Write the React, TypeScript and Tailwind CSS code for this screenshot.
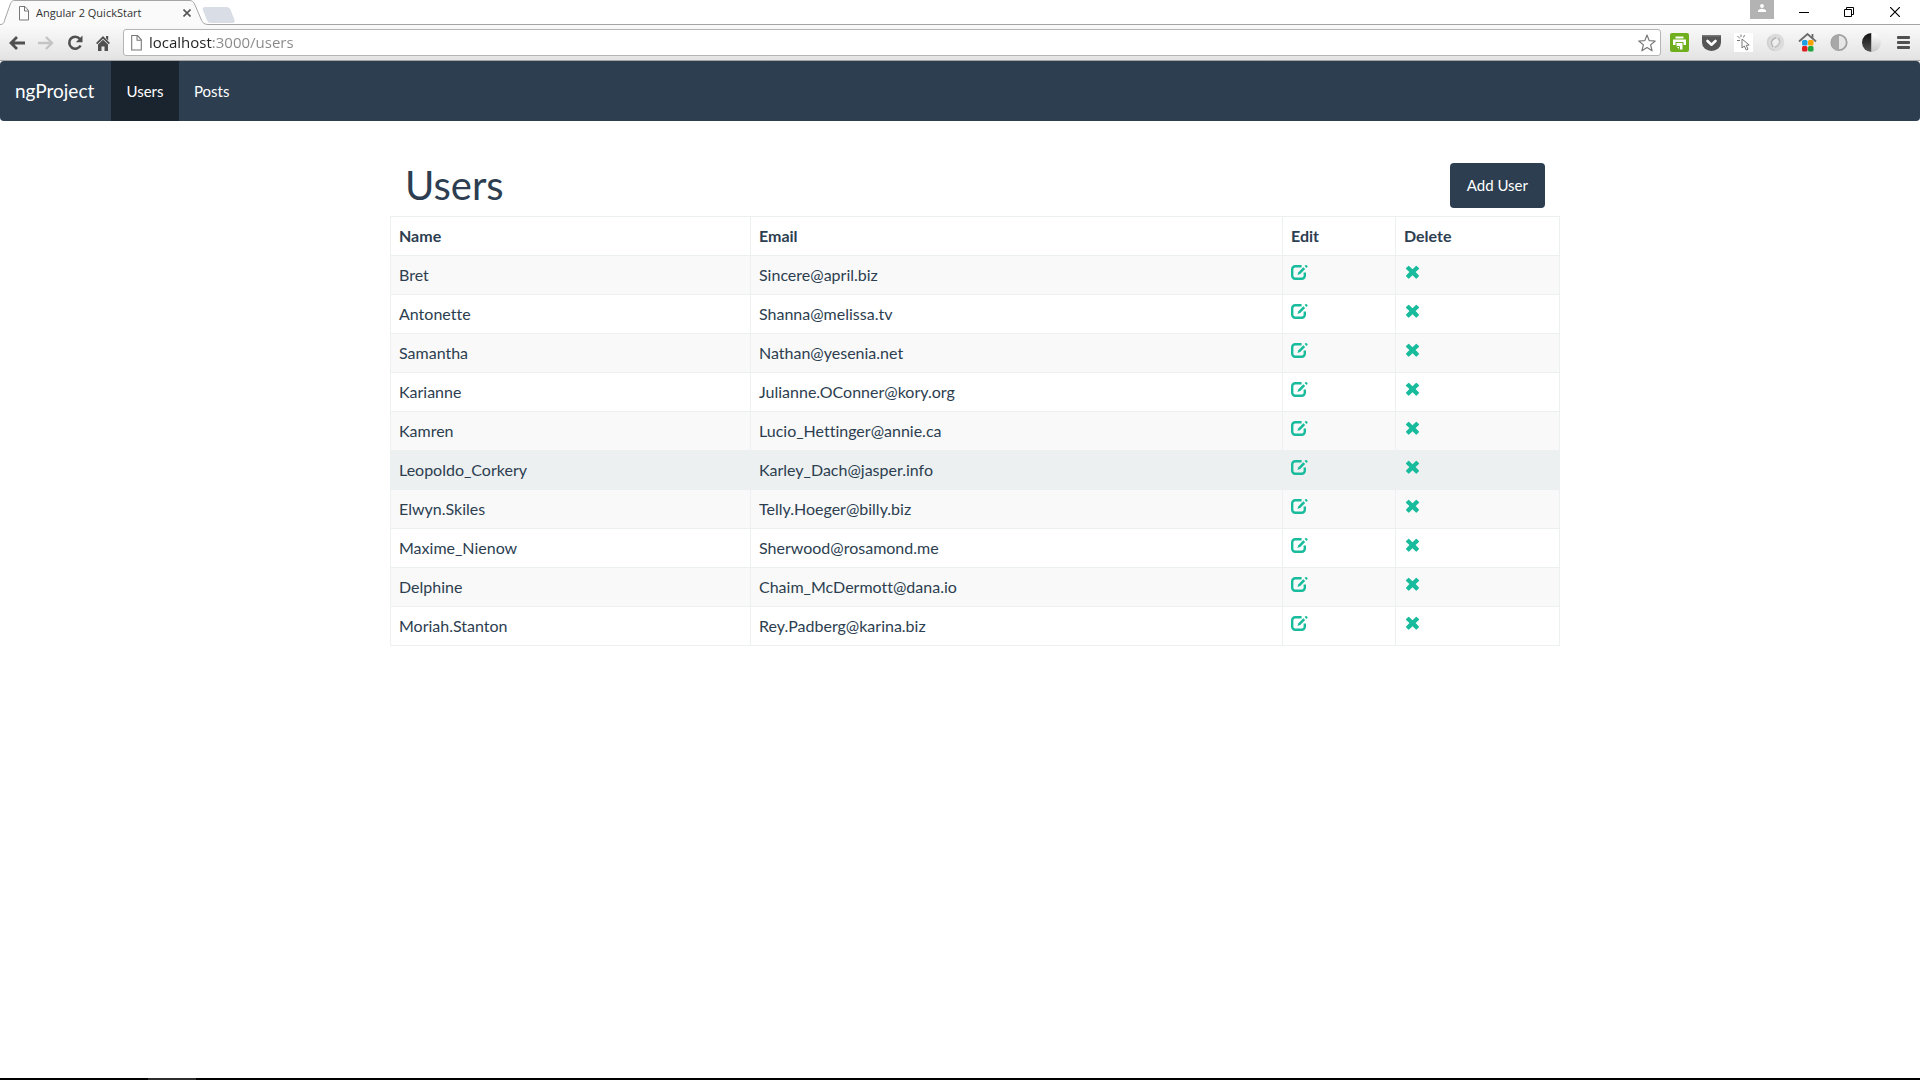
import { ReactNode } from "react";
import clsx from "clsx";

const users = [
  { name: "Bret", email: "Sincere@april.biz" },
  { name: "Antonette", email: "Shanna@melissa.tv" },
  { name: "Samantha", email: "Nathan@yesenia.net" },
  { name: "Karianne", email: "Julianne.OConner@kory.org" },
  { name: "Kamren", email: "Lucio_Hettinger@annie.ca" },
  { name: "Leopoldo_Corkery", email: "Karley_Dach@jasper.info", active: true },
  { name: "Elwyn.Skiles", email: "Telly.Hoeger@billy.biz" },
  { name: "Maxime_Nienow", email: "Sherwood@rosamond.me" },
  { name: "Delphine", email: "Chaim_McDermott@dana.io" },
  { name: "Moriah.Stanton", email: "Rey.Padberg@karina.biz" },
];

function PageIcon({ className }: { className?: string }) {
  return (
    <svg viewBox="0 0 12 15" className={className} fill="#fff" stroke="#777" strokeWidth="1">
      <path d="M1.5.5h5.5l3.5 4v9.5h-9z" />
      <path d="M6.5.5v4.5h4" fill="none" />
    </svg>
  );
}

function EditIcon() {
  return (
    <svg viewBox="0 0 17 15" className="h-[15px] w-[17px]" fill="none">
      <path
        d="M10.6 1.3H4.2A3 3 0 0 0 1.2 4.3v6.4a3 3 0 0 0 3 3h6.6a3 3 0 0 0 3-3V7.6"
        stroke="currentColor"
        strokeWidth="2.4"
      />
      <path d="M12.3 2.2l1.9 1.9-4.9 5-2.9 1 1-2.9z" fill="currentColor" />
      <path d="M13.6 1l1-.9q.5-.3 1 .1l.9.9q.3.5 0 .9l-1 .9z" fill="currentColor" />
    </svg>
  );
}

function RemoveIcon() {
  return (
    <svg viewBox="-1 0 15 15" className="size-[15px]">
      <path
        d="M4.1.9 7.5 4.2 10.9.9q.4-.3.8 0l2.2 2.2q.3.4 0 .8L10.6 7.1l3.3 3.4q.3.4 0 .8l-2.2 2.2q-.4.3-.8 0L7.5 10.2l-3.4 3.3q-.4.3-.8 0l-2.2-2.2q-.3-.4 0-.8l3.3-3.4L1.1 3.9q-.3-.4 0-.8L3.3.9q.4-.3.8 0z"
        fill="currentColor"
      />
    </svg>
  );
}

function ToolButton({ label, children }: { label: string; children: ReactNode }) {
  return (
    <button aria-label={label} className="size-[19px] shrink-0">
      {children}
    </button>
  );
}

function TabStrip() {
  return (
    <div className="flex h-6 items-start justify-between bg-white">
      <div className="flex">
        <div className="relative z-10 h-[25px] w-[210px]">
          <svg viewBox="0 0 210 25" className="absolute inset-0 size-full">
            <path
              d="M0 24.5C4 24.5 4 22 5 19L10 5C11.5 1 12.5.5 15 .5H189C192 .5 193.5 1.5 195 5L201 19C203 23.5 204 24.5 210 24.5V25H0Z"
              fill="#fafafa"
            />
            <path
              d="M0 24.5C4 24.5 4 22 5 19L10 5C11.5 1 12.5.5 15 .5H189C192 .5 193.5 1.5 195 5L201 19C203 23.5 204 24.5 210 24.5"
              fill="none"
              stroke="#a5a5a5"
            />
          </svg>
          <div className="relative flex h-6 items-center pt-0.5 pl-[18px] text-[11px] text-[#333]">
            <PageIcon className="mr-1.5 h-[15px] w-3" />
            <span className="w-[147px]">Angular 2 QuickStart</span>
            <button aria-label="Close tab">
              <svg viewBox="0 0 8 8" className="size-2" stroke="#555" strokeWidth="1.6">
                <path d="M.5.5l7 7M7.5.5l-7 7" />
              </svg>
            </button>
          </div>
        </div>
        <button aria-label="New tab" className="-ml-2 pt-[5px]">
          <svg viewBox="0 0 33 16" className="h-4 w-[33px]">
            <path d="M3 0H25q2.5 0 3.5 2.5L32.5 13q.8 3-2 3H9q-3 0-4-2.5L.8 3Q0 0 3 0z" fill="#d9dee6" />
          </svg>
        </button>
      </div>
      <div className="flex items-start pr-5">
        <button aria-label="Profile" className="flex h-[19px] w-6 justify-center bg-[#b3b3b3] pt-1">
          <svg viewBox="0 0 8 8" className="size-2" fill="#fff">
            <circle cx="4" cy="2" r="1.9" />
            <path d="M0 8V6.5Q1 4.8 4 4.8t4 1.7V8z" />
          </svg>
        </button>
        <button aria-label="Minimize" className="ml-[25px] pt-[7px]">
          <svg viewBox="0 0 10 10" className="size-2.5">
            <path d="M0 5.5h10" stroke="#000" />
          </svg>
        </button>
        <button aria-label="Restore" className="ml-[35px] pt-[7px]">
          <svg viewBox="0 0 10 10" className="size-2.5" fill="none" stroke="#000">
            <path d="M.5 2.5h7v7h-7zM2.5 2.5v-2h7v7h-2" />
          </svg>
        </button>
        <button aria-label="Close" className="ml-9 pt-[7px]">
          <svg viewBox="0 0 10 10" className="size-2.5" stroke="#000" strokeWidth="1.2">
            <path d="M0 0l10 10M10 0L0 10" />
          </svg>
        </button>
      </div>
    </div>
  );
}

function Toolbar() {
  return (
    <div className="flex h-[37px] items-center border-t border-b border-[#a5a5a5] bg-linear-to-b from-[#fafafa] to-[#e3e3e3] pr-2.5 pl-[9px]">
      <div className="flex w-[114px] items-center gap-[13px]">
        <button aria-label="Back">
          <svg viewBox="0 0 16 14" className="h-3.5 w-4" fill="none" stroke="#505050" strokeWidth="2.8">
            <path d="M8 1L2 7l6 6M2.5 7H16" />
          </svg>
        </button>
        <button aria-label="Forward">
          <svg viewBox="0 0 16 14" className="h-3.5 w-4" fill="none" stroke="#c4c4c4" strokeWidth="2.4">
            <path d="M8 1l6 6-6 6M13.5 7H0" />
          </svg>
        </button>
        <button aria-label="Reload">
          <svg viewBox="0 0 16 16" className="size-4" fill="none">
            <path d="M12.8 3.8A6 6 0 1 0 13.6 10.5" stroke="#505050" strokeWidth="2.6" />
            <path d="M15.5.5v6.7H8.8z" fill="#505050" />
          </svg>
        </button>
        <button aria-label="Home">
          <svg viewBox="0 0 14 16" className="h-4 w-3.5" fill="#505050">
            <path d="M7 1l7 7-1.3 1.3L7 3.7 1.3 9.3 0 8z" />
            <path d="M2 9.6l5-4.8 5 4.8V16H8.5v-4.5h-3V16H2zM10 1h2.2v4.5L10 3.3z" />
          </svg>
        </button>
      </div>
      <div className="flex h-[27px] grow items-center rounded-[3px] border border-[#b5b5b5] bg-white pr-1 pl-1.5">
        <label htmlFor="address" className="mr-1.5">
          <PageIcon className="h-4 w-[13px]" />
        </label>
        {/* host is dark, the rest of the address is dimmed */}
        <input
          id="address"
          aria-label="Address"
          defaultValue="localhost:3000/users"
          className="h-full min-w-0 grow bg-linear-to-r from-[#222] from-[64px] to-[#888] to-[64px] bg-clip-text pb-0.5 text-[15px] text-transparent outline-none"
        />
        <button aria-label="Bookmark">
          <svg viewBox="0 0 18 18" className="size-[18px]" fill="#fff" stroke="#777" strokeWidth="1.2" strokeLinejoin="round">
            <path d="M9 1l2.2 5.6 6 .4-4.6 3.9 1.5 5.9L9 13.5l-5.1 3.3 1.5-5.9L.8 7l6-.4z" />
          </svg>
        </button>
      </div>
      <div className="ml-[9px] flex items-center gap-[13px]">
        <ToolButton label="Print">
          <svg viewBox="0 0 19 19" className="size-full">
            <rect width="19" height="19" rx="2" fill="#6faf1d" />
            <path d="M5.5 3.5h8v2h-8z" fill="#fff" />
            <path d="M3 6.5h13v5.5h-2.5V9H5.500v3H3z" fill="#fff" />
            <path d="M6.5 10h6v6.5H9.500l-3-3z" fill="#fff" />
            <path d="M6.500 13.500h3v3" fill="none" stroke="#6faf1d" />
          </svg>
        </ToolButton>
        <ToolButton label="Pocket">
          <svg viewBox="0 0 19 19" className="size-full">
            <path d="M0 2h19v7.5a9.5 8.5 0 0 1-19 0z" fill="#555" />
            <path d="M0 2h19v1.5H0z" fill="#777" />
            <path d="M5.5 8l4 3.7 4-3.7" fill="none" stroke="#fff" strokeWidth="2.6" strokeLinecap="round" strokeLinejoin="round" />
          </svg>
        </ToolButton>
        <ToolButton label="Pointer">
          <svg viewBox="0 0 19 19" className="size-full" fill="none" stroke="#777">
            <path d="M0 0h19v19H0z" fill="#fff" stroke="none" />
            <path d="M8 6v9l2.300-2 2 4 1.700-.8-1.800-3.900 3-.3zM3 7.500h3M3.500 3l2.500 2.500M7 1.500V4M10.500 2L9.500 4.500" />
          </svg>
        </ToolButton>
        <ToolButton label="Ring">
          <svg viewBox="0 0 19 19" className="size-full" fill="none">
            <circle cx="9.5" cy="9.5" r="6.3" stroke="#dcdcdc" strokeWidth="5" />
            <path d="M9 17.5A8 8 0 0 1 4 4" stroke="#cfcfcf" strokeWidth="1.5" />
            <path d="M7 14Q2.5 8 10 4.5" stroke="#b5b5b5" strokeWidth="1.5" />
            <path d="M12 5q4.5 5-3 9.5" stroke="#c0c0c0" strokeWidth="1.5" />
          </svg>
        </ToolButton>
        <ToolButton label="Start page">
          <svg viewBox="0 0 19 19" className="size-full">
            <path d="M1 8.5L9.5 1 18 8.5M14.5 1v4" fill="none" stroke="#6b6b6b" strokeWidth="1.8" />
            <rect x="4" y="7" width="5.5" height="5.5" rx="1.5" fill="#1ba1e2" />
            <rect x="10" y="7" width="5.5" height="5.5" rx="1.5" fill="#f9a100" />
            <rect x="4" y="13" width="5.5" height="5.5" rx="1.5" fill="#e02020" />
            <rect x="10" y="13" width="5.5" height="5.5" rx="1.5" fill="#1da53f" />
          </svg>
        </ToolButton>
        <ToolButton label="Contrast">
          <svg viewBox="0 0 19 19" className="size-full">
            <circle cx="9" cy="9.5" r="7.7" fill="#e6e6e6" stroke="#a0a0a0" strokeWidth="1.8" />
            <path d="M9 1.8a7.7 7.7 0 0 0 0 15.4z" fill="#a8a8a8" />
          </svg>
        </ToolButton>
        <ToolButton label="Dark mode">
          <svg viewBox="0 0 19 19" className="size-full">
            <defs>
              <linearGradient id="dark" x2="0" y2="1">
                <stop stopColor="#111" />
                <stop offset="1" stopColor="#555" />
              </linearGradient>
              <linearGradient id="light" x2="0" y2="1">
                <stop stopColor="#fff" />
                <stop offset="1" stopColor="#c8c8c8" />
              </linearGradient>
            </defs>
            <path d="M9.5 0a9.5 9.5 0 0 0 0 19z" fill="url(#dark)" />
            <path d="M9.5 0a9.5 9.5 0 0 1 0 19z" fill="url(#light)" />
          </svg>
        </ToolButton>
        <button aria-label="Menu" className="ml-[3px]">
          <svg viewBox="0 0 13 13" className="size-[13px]" fill="#505050">
            <rect width="13" height="3" rx="1" />
            <rect y="5" width="13" height="3" rx="1" />
            <rect y="10" width="13" height="3" rx="1" />
          </svg>
        </button>
      </div>
    </div>
  );
}

function Navbar() {
  return (
    <nav className="flex h-[60px] items-stretch rounded bg-[#2c3e50] text-[15px] text-white">
      <a href="#" className="flex w-[111px] items-center pl-[15px] text-[19px]">
        ngProject
      </a>
      <a href="#users" className="flex w-[68px] items-center justify-center bg-[#1a242f]">
        Users
      </a>
      <a href="#posts" className="flex items-center px-[15px]">
        Posts
      </a>
    </nav>
  );
}

function UsersTable() {
  const cell = "border border-[#ecf0f1] p-2";

  return (
    <table className="w-full table-fixed border-collapse text-left text-[16px] leading-[22px] [font-variant-ligatures:none]">
      <thead>
        <tr>
          <th className={clsx(cell, "w-[360px]")}>Name</th>
          <th className={cell}>Email</th>
          <th className={clsx(cell, "w-[113px]")}>Edit</th>
          <th className={clsx(cell, "w-[164px]")}>Delete</th>
        </tr>
      </thead>
      <tbody>
        {users.map((user) => (
          <tr key={user.name} className={user.active ? "bg-[#ecf0f1]" : "odd:bg-[#f9f9f9]"}>
            <td className={cell}>{user.name}</td>
            <td className={cell}>{user.email}</td>
            <td className={cell}>
              <a href="#edit" aria-label={`Edit ${user.name}`} className="flex h-[22px] items-start pt-px text-[#18bc9c]">
                <EditIcon />
              </a>
            </td>
            <td className={cell}>
              <a href="#delete" aria-label={`Delete ${user.name}`} className="flex h-[22px] items-start pt-px text-[#18bc9c]">
                <RemoveIcon />
              </a>
            </td>
          </tr>
        ))}
      </tbody>
    </table>
  );
}

export default function App() {
  return (
    <div className="flex min-h-screen flex-col bg-white">
      <header className="font-['Open_Sans',sans-serif]">
        <TabStrip />
        <Toolbar />
      </header>
      <div className="grow font-[Lato,sans-serif] text-[15px] text-[#2c3e50]">
        <Navbar />
        <main className="mx-auto max-w-[1200px] pt-[42px] pl-[30px]">
          <div className="mb-2 flex items-start justify-between px-[15px]">
            <h1 className="text-[40px] leading-[44px]">Users</h1>
            <button className="h-[45px] rounded bg-[#2c3e50] px-[17px] text-white">Add User</button>
          </div>
          <UsersTable />
        </main>
      </div>
      <footer className="h-0.5 bg-black pl-[148px]">
        <div className="h-full w-12 bg-[#2d2d2d]" />
      </footer>
    </div>
  );
}
